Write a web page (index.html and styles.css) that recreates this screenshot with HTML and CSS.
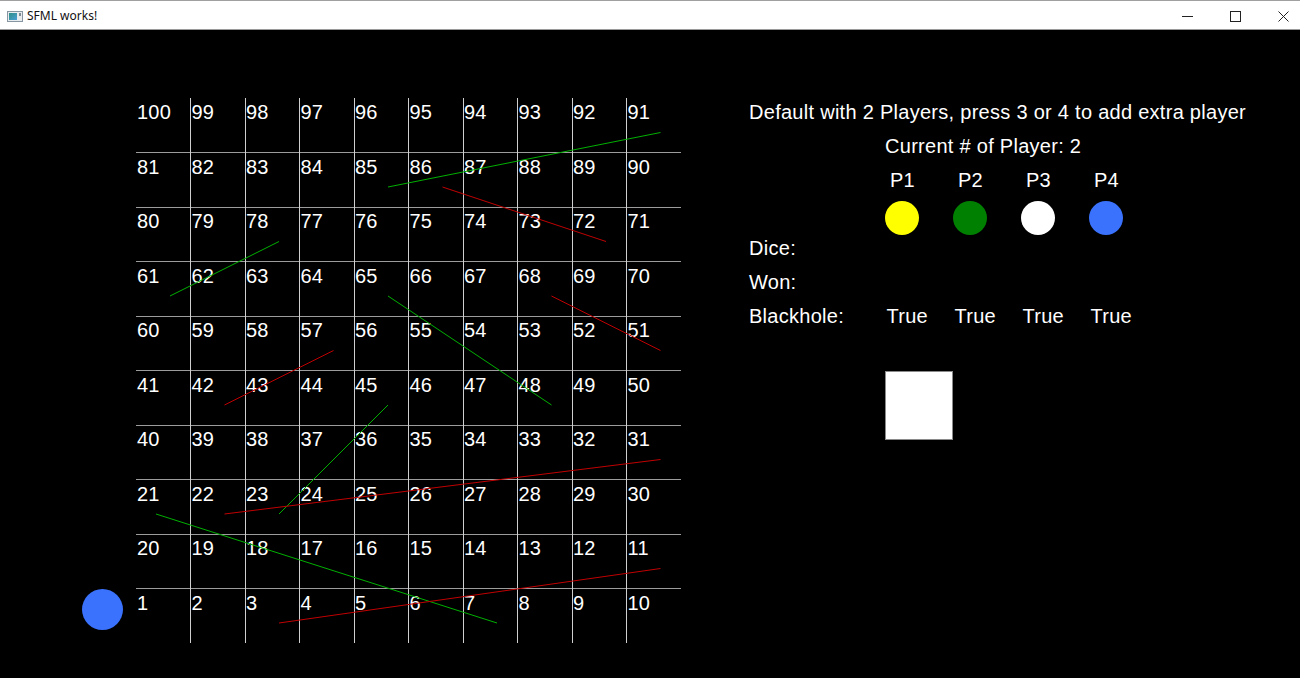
FILE: index.html
```html
<!DOCTYPE html>
<html lang="en">
<head>
<meta charset="utf-8">
<title>SFML works!</title>
<link rel="stylesheet" href="styles.css">
</head>
<body>
<div class="window">
  <header class="titlebar">
    <span class="app-icon">
      <svg width="16" height="11" viewBox="0 0 16 11">
        <defs>
          <linearGradient id="ig" x1="0" y1="0" x2="1" y2="1">
            <stop offset="0" stop-color="#2f8f86"/>
            <stop offset="1" stop-color="#4a9fd6"/>
          </linearGradient>
        </defs>
        <rect x="0.5" y="0.5" width="15" height="10" fill="#e8ecef" stroke="#8796a3"/>
        <rect x="2" y="2" width="8" height="7" fill="url(#ig)"/>
        <rect x="12" y="2" width="2" height="3" fill="#7f8c96"/>
      </svg>
    </span>
    <span class="title">SFML works!</span>
    <div class="controls">
      <svg class="ctl" width="11" height="11" viewBox="0 0 11 11"><line x1="0" y1="5.5" x2="11" y2="5.5" stroke="#222" stroke-width="1"/></svg>
      <svg class="ctl" width="11" height="11" viewBox="0 0 11 11"><rect x="0.5" y="0.5" width="10" height="10" fill="none" stroke="#222" stroke-width="1"/></svg>
      <svg class="ctl" width="11" height="11" viewBox="0 0 11 11"><path d="M0.5 0.5 L10.5 10.5 M10.5 0.5 L0.5 10.5" stroke="#222" stroke-width="1"/></svg>
    </div>
  </header>

  <main class="scene">
    <div class="token"></div>

    <section class="board">
      <div class="cell">100</div><div class="cell">99</div><div class="cell">98</div><div class="cell">97</div><div class="cell">96</div><div class="cell">95</div><div class="cell">94</div><div class="cell">93</div><div class="cell">92</div><div class="cell">91</div>
      <div class="cell">81</div><div class="cell">82</div><div class="cell">83</div><div class="cell">84</div><div class="cell">85</div><div class="cell">86</div><div class="cell">87</div><div class="cell">88</div><div class="cell">89</div><div class="cell">90</div>
      <div class="cell">80</div><div class="cell">79</div><div class="cell">78</div><div class="cell">77</div><div class="cell">76</div><div class="cell">75</div><div class="cell">74</div><div class="cell">73</div><div class="cell">72</div><div class="cell">71</div>
      <div class="cell">61</div><div class="cell">62</div><div class="cell">63</div><div class="cell">64</div><div class="cell">65</div><div class="cell">66</div><div class="cell">67</div><div class="cell">68</div><div class="cell">69</div><div class="cell">70</div>
      <div class="cell">60</div><div class="cell">59</div><div class="cell">58</div><div class="cell">57</div><div class="cell">56</div><div class="cell">55</div><div class="cell">54</div><div class="cell">53</div><div class="cell">52</div><div class="cell">51</div>
      <div class="cell">41</div><div class="cell">42</div><div class="cell">43</div><div class="cell">44</div><div class="cell">45</div><div class="cell">46</div><div class="cell">47</div><div class="cell">48</div><div class="cell">49</div><div class="cell">50</div>
      <div class="cell">40</div><div class="cell">39</div><div class="cell">38</div><div class="cell">37</div><div class="cell">36</div><div class="cell">35</div><div class="cell">34</div><div class="cell">33</div><div class="cell">32</div><div class="cell">31</div>
      <div class="cell">21</div><div class="cell">22</div><div class="cell">23</div><div class="cell">24</div><div class="cell">25</div><div class="cell">26</div><div class="cell">27</div><div class="cell">28</div><div class="cell">29</div><div class="cell">30</div>
      <div class="cell">20</div><div class="cell">19</div><div class="cell">18</div><div class="cell">17</div><div class="cell">16</div><div class="cell">15</div><div class="cell">14</div><div class="cell">13</div><div class="cell">12</div><div class="cell">11</div>
      <div class="cell">1</div><div class="cell">2</div><div class="cell">3</div><div class="cell">4</div><div class="cell">5</div><div class="cell">6</div><div class="cell">7</div><div class="cell">8</div><div class="cell">9</div><div class="cell">10</div>

      <svg class="overlay" width="545" height="545" viewBox="0 0 545 545">
        <g class="hlines" stroke="#9c9c9c" stroke-width="1">
          <line x1="0" y1="54.5" x2="545" y2="54.5"/>
          <line x1="0" y1="109.5" x2="545" y2="109.5"/>
          <line x1="0" y1="163.5" x2="545" y2="163.5"/>
          <line x1="0" y1="218.5" x2="545" y2="218.5"/>
          <line x1="0" y1="272.5" x2="545" y2="272.5"/>
          <line x1="0" y1="327.5" x2="545" y2="327.5"/>
          <line x1="0" y1="381.5" x2="545" y2="381.5"/>
          <line x1="0" y1="436.5" x2="545" y2="436.5"/>
          <line x1="0" y1="490.5" x2="545" y2="490.5"/>
        </g>
        <g class="vlines" stroke="#cfcfcf" stroke-width="1">
          <line x1="54.5" y1="0" x2="54.5" y2="545"/>
          <line x1="109.5" y1="0" x2="109.5" y2="545"/>
          <line x1="163.5" y1="0" x2="163.5" y2="545"/>
          <line x1="218.5" y1="0" x2="218.5" y2="545"/>
          <line x1="272.5" y1="0" x2="272.5" y2="545"/>
          <line x1="327.5" y1="0" x2="327.5" y2="545"/>
          <line x1="381.5" y1="0" x2="381.5" y2="545"/>
          <line x1="436.5" y1="0" x2="436.5" y2="545"/>
          <line x1="490.5" y1="0" x2="490.5" y2="545"/>
        </g>
        <g class="ladders" stroke="#00b000" stroke-width="1">
          <line x1="252" y1="89" x2="524.5" y2="34.5"/>
          <line x1="34" y1="198" x2="143" y2="143.5"/>
          <line x1="252" y1="198" x2="415.5" y2="307"/>
          <line x1="143" y1="416" x2="252" y2="307"/>
          <line x1="20" y1="416" x2="361" y2="525"/>
        </g>
        <g class="snakes" stroke="#c00000" stroke-width="1">
          <line x1="306.5" y1="89" x2="470" y2="143.5"/>
          <line x1="415.5" y1="198" x2="524.5" y2="252.5"/>
          <line x1="88.5" y1="307" x2="197.5" y2="252.5"/>
          <line x1="88.5" y1="416" x2="524.5" y2="361.5"/>
          <line x1="143" y1="525" x2="524.5" y2="470.5"/>
        </g>
      </svg>
    </section>

    <aside class="panel">
      <div class="headline">Default with 2 Players, press 3 or 4 to add extra player</div>
      <div class="count">Current # of Player: 2</div>
      <div class="players">
        <div class="plabel">P1</div>
        <div class="plabel">P2</div>
        <div class="plabel">P3</div>
        <div class="plabel">P4</div>
      </div>
      <div class="players dots">
        <div class="dot dot-yellow"></div>
        <div class="dot dot-green"></div>
        <div class="dot dot-white"></div>
        <div class="dot dot-blue"></div>
      </div>
      <div class="stat"><span class="stat-label">Dice:</span></div>
      <div class="stat"><span class="stat-label">Won:</span></div>
      <div class="stat">
        <span class="stat-label">Blackhole:</span>
        <span class="stat-val">True</span>
        <span class="stat-val">True</span>
        <span class="stat-val">True</span>
        <span class="stat-val">True</span>
      </div>
      <div class="dice"></div>
    </aside>
  </main>
</div>
</body>
</html>
```

FILE: styles.css
```css
html, body {
  margin: 0;
  padding: 0;
  background: #000;
}

.window {
  width: 1300px;
  height: 678px;
  overflow: hidden;
  background: #000;
}

.titlebar {
  box-sizing: border-box;
  height: 30px;
  background: #fff;
  border-top: 1px solid #a0a0a0;
  border-bottom: 1px solid #9a9a9a;
  display: flex;
  align-items: center;
  font-family: "Noto Sans", "Open Sans", sans-serif;
  font-size: 12px;
  color: #111;
}

.app-icon {
  display: flex;
  margin-left: 7px;
  margin-top: 2px;
}

.title {
  margin-left: 4px;
  margin-top: 1px;
}

.controls {
  margin-left: auto;
  margin-right: 11px;
  display: flex;
  align-items: center;
  gap: 37px;
  margin-top: 2px;
}

.ctl {
  display: block;
}

.scene {
  position: relative;
  height: 648px;
  display: flex;
  align-items: flex-start;
  padding-top: 65px;
  box-sizing: border-box;
  font-family: "Liberation Sans", Arial, sans-serif;
  color: #fff;
}

.token {
  position: absolute;
  left: 82px;
  top: 559px;
  width: 41px;
  height: 41px;
  border-radius: 50%;
  background: #3a72fd;
}

.board {
  position: relative;
  margin-left: 136px;
  margin-top: 3px;
  width: 545px;
  height: 545px;
  display: grid;
  grid-template-columns: repeat(10, 54.5px);
  grid-template-rows: repeat(10, 54.5px);
}

.cell {
  font-size: 20px;
  line-height: 23px;
  padding-top: 3px;
  padding-left: 1px;
  letter-spacing: 0.25px;
  color: #fff;
}

.overlay {
  position: absolute;
  left: 0;
  top: 0;
  pointer-events: none;
}

.panel {
  margin-left: 68px;
  font-size: 20px;
  line-height: 34px;
  letter-spacing: 0.28px;
  color: #fff;
}

.headline {
  white-space: nowrap;
}

.count {
  margin-left: 136px;
}

.players {
  margin-left: 136px;
  display: grid;
  grid-template-columns: repeat(4, 34px);
  column-gap: 34px;
}

.plabel {
  text-align: center;
  white-space: nowrap;
  padding-left: 1px;
}

.dots {
  height: 34px;
  margin-top: 4px;
  margin-bottom: -4px;
}

.dot {
  width: 34px;
  height: 34px;
  border-radius: 50%;
}

.dot-yellow { background: #ffff00; }
.dot-green { background: #008000; }
.dot-white { background: #ffffff; }
.dot-blue { background: #3a72fd; }

.stat {
  display: flex;
  height: 34px;
}

.stat-label {
  width: 136px;
}

.stat-val {
  box-sizing: border-box;
  width: 68px;
  padding-left: 1.5px;
}

.dice {
  margin-left: 136px;
  margin-top: 38px;
  width: 66px;
  height: 67px;
  border: 1px solid #8a8a8a;
  background: #fff;
}
```
